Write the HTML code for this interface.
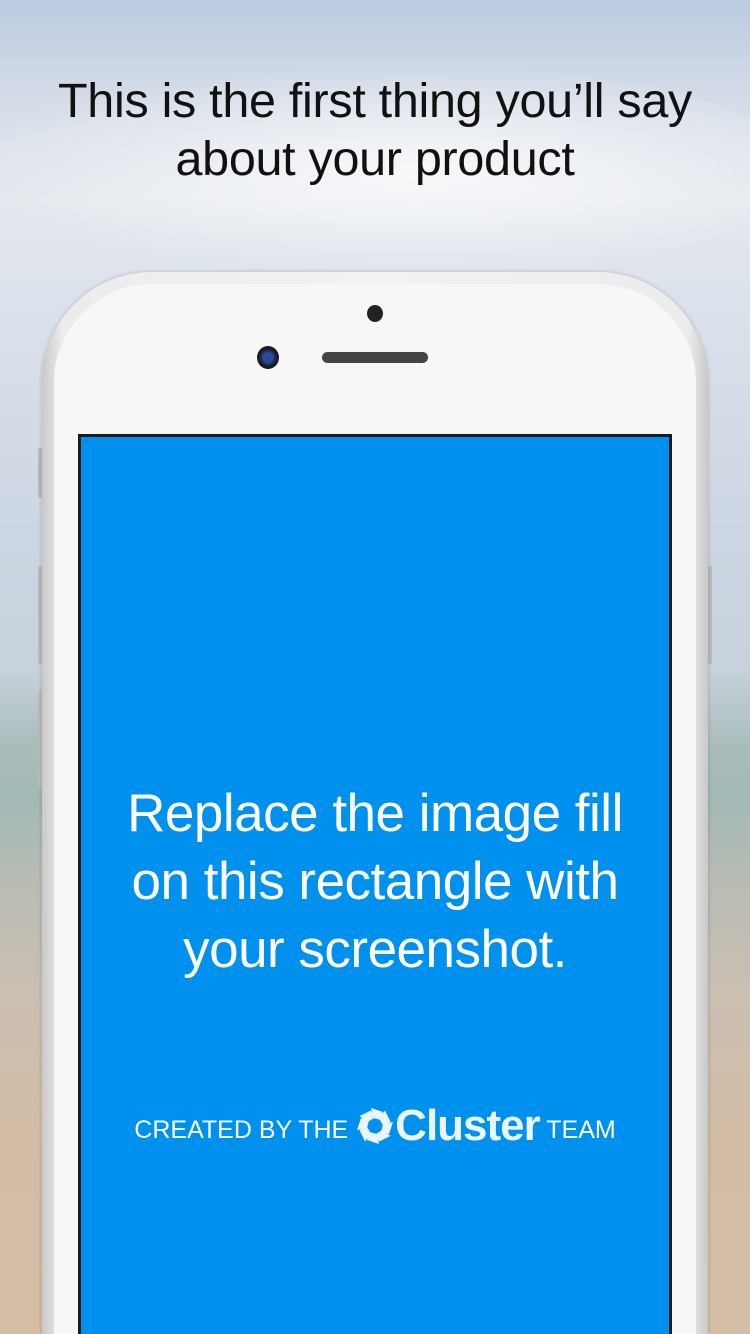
<!DOCTYPE html>
<html><head><meta charset="utf-8"><style>
html,body{margin:0;padding:0;width:750px;height:1334px;overflow:hidden}
body{position:relative;font-family:"Liberation Sans",sans-serif;
background:linear-gradient(180deg,#bccbe0 0%,#d6dde8 8%,#e4e8ee 15%,#d9e0ea 25%,#ccd6e2 40%,#c8d2dc 50%,#a9bcbc 56%,#a3b9b6 60%,#b9bcb4 66%,#c9bfb2 74%,#d2bca6 85%,#d6bea6 100%);}
.cloud{position:absolute;left:-50px;top:60px;width:850px;height:220px;border-radius:50%;background:radial-gradient(ellipse at 55% 50%,rgba(255,255,255,.75),rgba(255,255,255,0) 70%);}
h1{position:absolute;top:72px;left:0;width:750px;margin:0;text-align:center;font-weight:normal;font-size:48.5px;line-height:58px;color:#111;letter-spacing:-0.3px}
.phone{position:absolute;left:42px;top:272px;width:666px;height:1062px;border-radius:110px 110px 0 0;background:linear-gradient(90deg,#c9c9c9,#ececec 3%,#f2f2f2 50%,#ececec 97%,#c9c9c9);box-shadow:0 0 4px rgba(0,0,0,.2)}
.inner{position:absolute;left:12px;top:12px;right:12px;bottom:0;border-radius:98px 98px 0 0;background:#f7f7f7}
.btn{position:absolute;width:5px;background:#bbb;border-radius:2px}
.screen{position:absolute;left:78px;top:434px;width:588px;height:900px;background:#0091ee;border:3px solid #1a1a1a;border-bottom:none}
.txt{position:absolute;top:780px;left:78px;width:594px;text-align:center;color:#fff;font-size:53px;line-height:68px;font-weight:300;letter-spacing:-0.5px}
.cr{position:absolute;top:1096px;left:0;width:750px;text-align:center;color:#fff;font-size:25px;line-height:60px;white-space:nowrap}
.cr b{font-size:44px;font-weight:bold;letter-spacing:-1px;color:#eaf5ff;vertical-align:-2px}
</style></head><body>
<div class="cloud"></div>
<h1>This is the first thing you’ll say<br>about your product</h1>
<div class="btn" style="left:38px;top:448px;height:50px"></div>
<div class="btn" style="left:38px;top:566px;height:98px"></div>
<div class="btn" style="left:38px;top:690px;height:98px"></div>
<div class="btn" style="left:707px;top:566px;height:98px"></div>
<div class="phone"><div class="inner"></div></div>
<div style="position:absolute;left:367px;top:305px;width:16px;height:17px;border-radius:50%;background:#222"></div>
<div style="position:absolute;left:257px;top:346px;width:22px;height:23px;border-radius:50%;background:radial-gradient(circle,#2a4a9a 0 30%,#1a1a22 55%)"></div>
<div style="position:absolute;left:322px;top:352px;width:106px;height:11px;border-radius:6px;background:#444"></div>
<div class="screen"></div>
<div class="txt">Replace the image fill<br>on this rectangle with<br>your screenshot.</div>
<div class="cr">CREATED BY THE <svg width="40" height="40" viewBox="0 0 40 40" style="vertical-align:-8px"><g fill="#eaf5ff" transform="translate(20 20)"><g id="p"><path d="M-4 -18 L8 -14 L6 -6 L-2 -8Z"/></g><use href="#p" transform="rotate(45)"/><use href="#p" transform="rotate(90)"/><use href="#p" transform="rotate(135)"/><use href="#p" transform="rotate(180)"/><use href="#p" transform="rotate(225)"/><use href="#p" transform="rotate(270)"/><use href="#p" transform="rotate(315)"/></g></svg><b>Cluster</b> TEAM</div>
</body></html>
